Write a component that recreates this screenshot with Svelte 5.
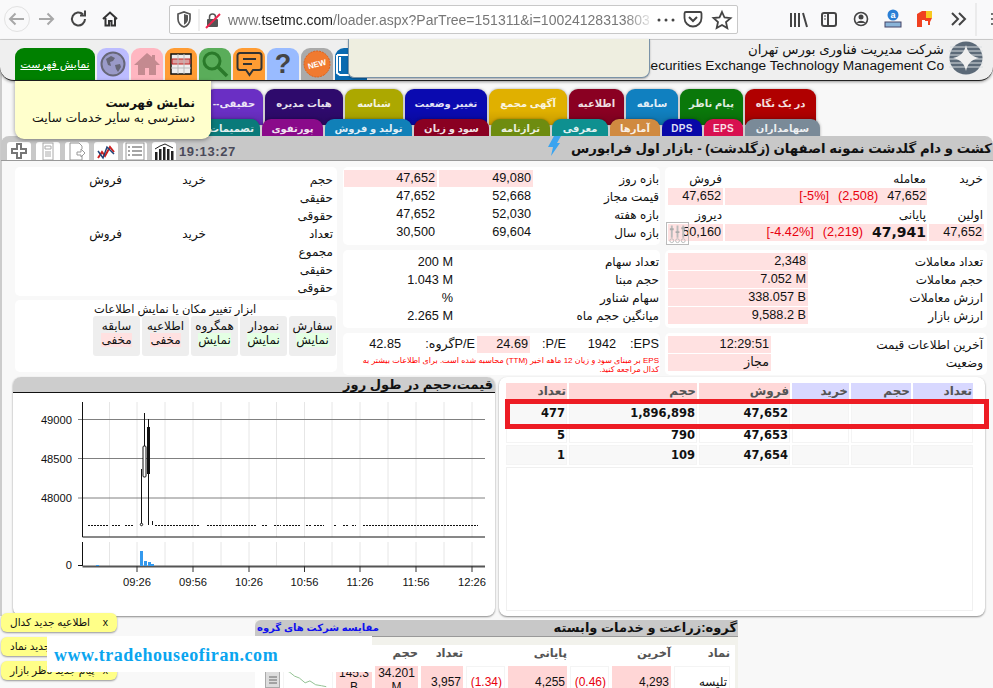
<script>
  const tabsTop = [
    ['حقیقی--', 58, '#6a2fc4'], ['هیات مدیره', 78, '#2e0a6c'], ['شناسه', 58, '#aca800'], ['تغییر وضعیت', 82, '#0a0ab0'],
    ['آگهی مجمع', 78, '#e0b000'], ['اطلاعیه', 55, '#8a0022'], ['سابقه', 52, '#1080c0'], ['پیام ناظر', 63, '#0a780a'], ['در یک نگاه', 71, '#b00000']
  ]
  const tabsBottom = [
    ['تصمیمات', 57, '#0a7a7a'], ['پورتفوی', 61, '#8a0a8a'], ['تولید و فروش', 87, '#1080b8'], ['سود و زیان', 75, '#8a0022'], ['ترازنامه', 59, '#6e8c10'],
    ['معرفی', 56, '#0e9090'], ['آمارها', 50, '#d08a40'], ['DPS', 40, '#0808a8'], ['EPS', 39, '#d81050'], ['سهامداران', 75, '#7a8a98']
  ]
  const ranges = [
    ['بازه روز', '49,080', '47,652', true], ['قیمت مجاز', '52,668', '47,652'], ['بازه هفته', '52,030', '47,652'], ['بازه سال', '69,604', '30,500']
  ]
  const trades = [['تعداد معاملات', '2,348'], ['حجم معاملات', '7.052 M'], ['ارزش معاملات', '338.057 B'], ['ارزش بازار', '9,588.2 B']]
  const shares = [['تعداد سهام', '200 M'], ['حجم مبنا', '1.043 M'], ['سهام شناور', '%'], ['میانگین حجم ماه', '2.265 M']]
  const people = [
    ['حجم', 'خرید', 'فروش'], ['حقیقی', '', ''], ['حقوقی', '', ''], ['تعداد', 'خرید', 'فروش'], ['مجموع', '', ''], ['حقیقی', '', ''], ['حقوقی', '', '']
  ]
  const tools = [['سفارش', 'نمایش', 1], ['نمودار', 'نمایش', 1], ['همگروه', 'نمایش', 1], ['اطلاعیه', 'مخفی', 0], ['سابقه', 'مخفی', 0]]
  const orders = [['477', '1,896,898', '47,652'], ['5', '790', '47,653'], ['1', '109', '47,654']]
  const vGrid = [109.5, 137, 165, 193, 221, 249, 276.5, 304.5, 332, 360, 388, 416, 444, 472]
  const times = [[137, '09:26'], [193, '09:56'], [249, '10:26'], [304.5, '10:56'], [360, '11:26'], [416, '11:56'], [472, '12:26']]
  const prices = [[419.5, '49000'], [458.5, '48500'], [498, '48000']]
  const dashes = [[88, 108], [112, 121], [125, 134], [155, 199], [207, 232], [233, 256], [262, 268], [274, 281], [283, 300], [306, 312], [314, 324], [334, 337], [343, 348], [352, 356], [363, 478]]
</script>

<div class="page">
  <div class="toolbar">
    <svg class="tb-left" width="125" height="40" viewBox="0 0 125 40" fill="none">
      <circle cx="17" cy="19" r="12.5" stroke="#e2e2e2" fill="#f9f9fa"/>
      <path d="M24 19H10M15.5 13.5L10 19l5.5 5.5" stroke="#a8a8a8" stroke-width="2"/>
      <path d="M39 19h14M47.5 13.5L53 19l-5.5 5.5" stroke="#a8a8a8" stroke-width="2"/>
      <path d="M85 19a6.5 6.5 0 1 1-2-4.7M85 10.5v5h-5" stroke="#444" stroke-width="2"/>
      <path d="M103 19l7-6.5 7 6.5M105.5 18v7.5h3.5v-4.5h2.5v4.5h3.5V18" stroke="#333" stroke-width="2"/>
    </svg>
    <div class="urlbar">
      <svg width="58" height="28" viewBox="0 0 58 28" fill="none">
        <path d="M8 8l6-2 6 2v5c0 4-3 7-6 8-3-1-6-4-6-8z" stroke="#555" stroke-width="1.7"/>
        <path d="M14 8l4 1.300v4c0 2.500-2 4.500-4 5.500z" fill="#555"/>
        <path d="M29 3v22" stroke="#ddd"/>
        <rect x="37" y="13" width="11" height="8" rx="1" fill="#555"/>
        <path d="M39.500 13v-2a3 3 0 0 1 6 0v2" stroke="#555" stroke-width="1.500"/>
        <path d="M36 22l14-14" stroke="#f0244e" stroke-width="2"/>
      </svg>
      <div class="url"><span>www.</span><b>tsetmc.com</b><span>/loader.aspx?ParTree=151311&amp;i=10024128313803</span></div>
      <svg width="82" height="28" viewBox="0 0 82 28" fill="none">
        <path d="M4 14h.01M11 14h.01M18 14h.01" stroke="#444" stroke-width="3" stroke-linecap="round"/>
        <path d="M31 6h14a1.500 1.500 0 0 1 1.500 1.500V12a8.500 8.500 0 0 1-17 0V7.500A1.500 1.500 0 0 1 31 6z" stroke="#444" stroke-width="1.800"/>
        <path d="M34 11l4 4 4-4" stroke="#444" stroke-width="2"/>
        <path d="M67 6l2.500 5.500 6 .6-4.500 4 1.300 6L67 19l-5.300 3 1.300-6-4.500-4 6-.6z" stroke="#444" stroke-width="1.800"/>
      </svg>
    </div>
    <svg class="tb-right" width="217" height="40" viewBox="776 0 217 40" fill="none">
      <path d="M791 13v14M795 13v14M799 13v14M803 13l4 14" stroke="#444" stroke-width="2"/>
      <rect x="822" y="13" width="14" height="13" rx="2" stroke="#444" stroke-width="2"/>
      <path d="M828 13v13" stroke="#444" stroke-width="2"/>
      <path d="M824 16h2M824 19h2" stroke="#444"/>
      <circle cx="861" cy="19" r="6.500" stroke="#444" stroke-width="1.600"/>
      <circle cx="861" cy="17" r="2.500" fill="#444"/>
      <path d="M856.500 23c2-3 7-3 9 0z" fill="#444"/>
      <circle cx="893" cy="15" r="5.500" fill="#2a7fd5"/>
      <text x="893" y="18" class="ext-a">a</text>
      <rect x="885" y="22" width="16" height="5" fill="#8ab4d8" stroke="#446"/>
      <path d="M917 14l5-3h9l1 1v6l-2 4v3h-2v-4h-3v-1h-3v7h-5z" fill="#f04020"/>
      <path d="M926 11h6v7h-6z" fill="#f8c820"/>
      <path d="M952 13l6 6-6 6M959 13l6 6-6 6" stroke="#444" stroke-width="2"/>
      <path d="M976 3v33" stroke="#ddd"/>
      <path d="M992 14v.01M992 19v.01M992 24v.01" stroke="#444" stroke-width="2" stroke-linecap="round"/>
    </svg>
  </div>

  <div class="site-header">
    <div class="icon-tabs">
      <a class="menu-btn">نمایش فهرست</a>
      <span class="itab lav"><svg width="26" height="26" viewBox="0 0 26 26" fill="none"><circle cx="13" cy="13" r="11.500" fill="#9a9ac8" stroke="#667" stroke-width="2"/><path d="M6 8l5-3 4 2-2 3-3 1 1 4-3-1zM15 14l5-1 1 3-3 5-2-3z" fill="#667"/></svg></span>
      <span class="itab pnk"><svg width="28" height="26" viewBox="0 0 28 26"><path d="M14 2L1 14h4v10h7v-7h4v7h7V14h4l-5-5V4h-3v2z" fill="#c48a90"/></svg></span>
      <span class="itab org"><svg width="22" height="22" viewBox="0 0 22 22"><rect x="1" y="1" width="20" height="20" fill="#eee" stroke="#111" stroke-width="1.500"/><path d="M2 6h18v5H2z" fill="#d9a0a0" stroke="#c02020"/><path d="M8 1v20M14 1v20M1 15h20" stroke="#bbb"/></svg></span>
      <span class="itab grn"><svg width="28" height="28" viewBox="0 0 28 28" fill="none"><circle cx="11" cy="11" r="8" stroke="#2a7a2a" stroke-width="3"/><path d="M17 17l9 9" stroke="#2a7a2a" stroke-width="3.500"/></svg></span>
      <span class="itab org"><svg width="27" height="26" viewBox="0 0 27 26" fill="none"><path d="M4 2h19a2.500 2.500 0 0 1 2.500 2.500v12A2.500 2.500 0 0 1 23 19h-6l-3.500 5-3.500-5H4a2.500 2.500 0 0 1-2.500-2.500v-12A2.500 2.500 0 0 1 4 2z" stroke="#333" stroke-width="2"/><path d="M7 8h13M7 13h9" stroke="#333" stroke-width="2"/></svg></span>
      <span class="itab blu"><span class="qmark">?</span></span>
      <span class="itab gry"><svg width="28" height="28" viewBox="0 0 28 28"><circle cx="14" cy="14" r="13" fill="#f07a30" stroke="#e06018" stroke-dasharray="2 1"/><text x="14" y="17" class="new" transform="rotate(-15 14 14)">NEW</text></svg></span>
      <span class="itab book"><svg width="14" height="26" viewBox="0 0 14 26" fill="none"><path d="M2 4h12M2 4v18l3 2h9M5 6v14" stroke="#fff" stroke-width="2"/></svg></span>
    </div>
    <div class="brand">
      <div class="brand-text">
        <div class="fa">شرکت مدیریت فناوری بورس تهران</div>
        <div class="en">Tehran Securities Exchange Technology Management Co</div>
      </div>
      <svg width="34" height="34" viewBox="0 0 34 34">
        <circle cx="17" cy="17" r="16.500" fill="#5c6a78"/>
        <path d="M1 6h32M0 10h34M0 14h34M0 18h34M0 22h34M0 26h34" stroke="#d8dde0" stroke-width="1"/>
        <path d="M17 4c1.500 7 5 11.500 13 13-8 1.500-11.500 6-13 13-1.500-7-5-11.500-13-13 8-1.500 11.500-6 13-13z" fill="#f0f0f0"/>
      </svg>
    </div>
    <div class="popup"></div>
  </div>

  <div class="menu">
    <div class="tab-row">
      {#each tabsTop as t}
        <span class="tab" style="width:{t[1]}px;background:{t[2]}">{t[0]}</span>
      {/each}
    </div>
    <div class="tab-row second">
      {#each tabsBottom as t}
        <span class="tab" style="width:{t[1]}px;background:{t[2]}">{t[0]}</span>
      {/each}
    </div>
  </div>

  <div class="tooltip">
    <b>نمایش فهرست</b>
    <span>دسترسی به سایر خدمات سایت</span>
  </div>

  <div class="titlebar">
    <div class="tools">
      <span class="tool"><svg width="18" height="18" viewBox="0 0 18 18" fill="none"><path d="M7 2h4v5h5v4h-5v5H7v-5H2V7h5z" stroke="#777" stroke-width="2"/></svg></span>
      <span class="tool"><svg width="18" height="18" viewBox="0 0 18 18" fill="none"><rect x="4" y="1" width="10" height="17" stroke="#aaa"/><path d="M6 4h6v3H6zM6 10h6M6 12h6M6 14h6" stroke="#aaa"/></svg></span>
      <span class="tool"><svg width="18" height="18" viewBox="0 0 18 18" fill="none"><path d="M2 1h9l3 3v3M2 1v17h12v-4M9 10h4V7l4 4-4 4v-2H9z" stroke="#999"/></svg></span>
      <span class="tool"><svg width="20" height="18" viewBox="0 0 20 18" fill="none"><path d="M2 16l4-6 3 4 5-9 4 5" stroke="#c22" stroke-width="2"/><path d="M2 9l5 7 4-11 7 7" stroke="#247" stroke-width="1.500"/></svg></span>
      <span class="tool"><svg width="20" height="18" viewBox="0 0 20 18" fill="none"><rect x="1" y="1" width="18" height="17" stroke="#999"/><path d="M3 5h2M3 9h2M3 13h2M7 5h10M7 9h10M7 13h10" stroke="#888" stroke-width="1.500"/></svg></span>
      <span class="tool"><svg width="20" height="18" viewBox="0 0 20 18" fill="#222"><path d="M1 10h2.500v8H1zM5 7h2.500v11H5zM9 5h2.500v13H9zM13 7h2.500v11H13zM17 9h2.500v9H17z"/><path d="M1 7l5-3 5-2 4 2 4 2" fill="none" stroke="#222"/></svg></span>
      <span class="clock">19:13:27</span>
    </div>
    <div class="title">
      <svg width="14" height="20" viewBox="0 0 14 20"><path d="M7 0h7l-4 7h3L4 20l2-9H1z" fill="#3aa4f0"/></svg>
      <span>کشت و دام گلدشت نمونه اصفهان (زگلدشت) - بازار اول فرابورس</span>
    </div>
  </div>

  <div class="info">
    <div class="side">
      <div class="card people">
        {#each people as p}
          <div class="p-row"><span>{p[0]}</span><span>{p[1]}</span><span>{p[2]}</span></div>
        {/each}
      </div>
      <div class="card toolbox">
        <div class="tb-title">ابزار تغییر مکان یا نمایش اطلاعات</div>
        <div class="tb-btns">
          {#each tools as t}
            <div class="tb-btn"><span>{t[0]}</span><span class={t[2] ? 'on' : 'off'}>{t[1]}</span></div>
          {/each}
        </div>
      </div>
    </div>

    <div class="card ranges">
      {#each ranges as r}
        <span class="lbl">{r[0]}</span>
        <span class="val" class:pink={r[3]}>{r[1]}</span>
        <span class="val" class:pink={r[3]}>{r[2]}</span>
      {/each}
    </div>

    <div class="card prices">
      <span class="lbl">خرید</span><span class="lbl">معامله</span><span class="lbl">فروش</span>
      <span></span>
      <span class="val pink deal"><span class="num">47,652</span><span class="num red">(2,508)</span><span class="num red">[-5%]</span></span>
      <span class="val pink">47,652</span>
      <span class="lbl">اولین</span><span class="lbl">پایانی</span><span class="lbl">دیروز</span>
      <span class="val pink">47,652</span>
      <span class="val pink deal"><span class="num big">47,941</span><span class="num red">(2,219)</span><span class="num red">[-4.42%]</span></span>
      <span class="val pink">50,160</span>
      <span class="mixer"><svg width="22" height="22" viewBox="0 0 22 22" fill="none"><path d="M5 2v13M11 2v13M17 2v13" stroke="#bbb" stroke-width="2"/><path d="M3 6h4M9 9h4M15 5h4" stroke="#aaa" stroke-width="2"/><circle cx="5" cy="18" r="2" stroke="#bbb"/><circle cx="11" cy="18" r="2" stroke="#bbb"/><circle cx="17" cy="18" r="2" stroke="#bbb"/></svg></span>
    </div>

    <div class="card shares">
      {#each shares as s}
        <span class="lbl">{s[0]}</span>
        <span class="num">{s[1]}</span>
      {/each}
    </div>

    <div class="card trades">
      {#each trades as t}
        <span class="lbl">{t[0]}</span>
        <span class="val pink">{t[1]}</span>
      {/each}
    </div>

    <div class="card eps">
      <div class="eps-row">
        <span>EPS:</span><span>1942</span><span class="pe">P/E:</span><span class="val pink">24.69</span><span class="ge">P/Eگروه:</span><span class="pe">42.85</span>
      </div>
      <p>EPS بر مبنای سود و زیان 12 ماهه اخیر (TTM) محاسبه شده است. برای اطلاعات بیشتر به کدال مراجعه کنید.</p>
    </div>

    <div class="card last">
      <span class="lbl">آخرین اطلاعات قیمت</span><span class="val pink">12:29:51</span>
      <span class="lbl">وضعیت</span><span class="val pink">مجاز</span>
    </div>
  </div>

  <div class="boards">
    <div class="board chart">
      <div class="board-head">قیمت،حجم در طول روز</div>
      <svg width="480" height="223" viewBox="14 393 480 223">
        {#each vGrid as x}
          <path d="M{x} 402V537M{x} 542V566" stroke="#e6e6e6"/>
        {/each}
        {#each prices as p}
          <path d="M78 {p[0]}H485" stroke="#808080"/>
          <text x="72" y={p[0] + 4} class="ax end">{p[1]}</text>
        {/each}
        {#each dashes as d}
          <path d="M{d[0]} 525.500H{d[1]}" stroke="#111" stroke-dasharray="2 1"/>
        {/each}
        <path d="M82.500 402V537H485M82.500 542V566" stroke="#111" fill="none"/>
        <path d="M82.500 566.500H485" stroke="#555" stroke-width="2"/>
        <path d="M141.500 469V524M144.500 413V446M148.500 419V525M152.500 521V525" stroke="#111"/>
        <rect x="143" y="446" width="3" height="31" rx="1" fill="#fff" stroke="#111"/>
        <rect x="147" y="427" width="3" height="47" fill="#111"/>
        <circle cx="141.500" cy="524.500" r="1.200" fill="#fff" stroke="#111"/>
        <path d="M140 551h3v15h-3zM144 561h3v5h-3zM148 562h3v4h-3zM151 564h3v2h-3zM96 565h3v1h-3z" fill="#3399ee"/>
        <path d="M78 565.500H82" stroke="#111"/>
        <text x="72" y="569" class="ax end">0</text>
        {#each times as t}
          <path d="M{t[0]} 566V572" stroke="#333"/>
          <text x={t[0]} y="586" class="ax mid">{t[1]}</text>
        {/each}
      </svg>
    </div>

    <div class="board book-side">
      <div class="ob-grid">
        <span class="bh blu-h">تعداد</span><span class="bh blu-h">حجم</span><span class="bh blu-h">خرید</span>
        <span class="bh pnk-h">فروش</span><span class="bh pnk-h">حجم</span><span class="bh pnk-h">تعداد</span>
        {#each orders as o, i}
          <span class="oc" class:alt={i !== 1}></span><span class="oc" class:alt={i !== 1}></span><span class="oc" class:alt={i !== 1}></span>
          <span class="oc" class:alt={i !== 1}>{o[2]}</span><span class="oc" class:alt={i !== 1}>{o[1]}</span><span class="oc" class:alt={i !== 1}>{o[0]}</span>
        {/each}
      </div>
      <div class="ob-empty"></div>
    </div>
  </div>

  <div class="group">
    <div class="group-head">
      <a>مقایسه شرکت های گروه</a>
      <b>گروه:زراعت و خدمات وابسته</b>
    </div>
    <div class="group-grid">
      <span class="gh">نماد</span><span class="gh">آخرین</span><span></span><span class="gh">پایانی</span><span></span><span class="gh">تعداد</span><span class="gh">حجم</span><span></span><span></span>
      <span class="gc plain">تلیسه</span>
      <span class="gc rose">4,293</span>
      <span class="gc plain red">(0.46)</span>
      <span class="gc rose">4,255</span>
      <span class="gc plain red">(1.34)</span>
      <span class="gc rose">3,957</span>
      <span class="gc rose wrap">34.201 M</span>
      <span class="gc rose wrap">145.3 B</span>
      <span class="gc plain spark"><svg width="50" height="24" viewBox="0 0 50 24" fill="none"><path d="M0 2l6 3 5 4 5 2 6 5 5-2 6 4 6 1 5 1" stroke="#8fbf8f"/></svg></span>
    </div>
    <div class="scroll"><svg width="10" height="10" viewBox="0 0 10 10"><path d="M1 2h8M1 5h8M1 8h8" stroke="#666"/></svg></div>
  </div>

  <div class="notices">
    <div class="notice"><span>اطلاعیه جدید کدال</span><i>x</i></div>
    <div class="notice"><span>اطلاعیه جدید نماد</span><i>x</i></div>
    <div class="notice"><span>پیام جدید ناظر بازار</span><i>x</i></div>
  </div>

  <div class="watermark">www.tradehouseofiran.com</div>
  <div class="highlight"></div>
</div>

<style>
  :global(body) {
    margin: 0;
  }

  .page {
    position: relative;
    width: 993px;
    height: 688px;
    overflow: hidden;
    background: linear-gradient(to right, #ccc 2px, transparent 2px) no-repeat 0 0 / 2px 616px, #f8f8f8;
    font-family: "Liberation Sans", "DejaVu Sans", sans-serif;
    font-size: 12px;
    color: #111;
  }

  .toolbar {
    display: flex;
    height: 40px;
    background: #f9f9fa;
    border-bottom: 1px solid #d4d4d4;
    box-sizing: border-box;
  }

  .tb-left {
    flex: none;
    margin-right: 44px;
  }

  .tb-right {
    flex: none;
    margin-left: 38px;
  }

  .urlbar {
    display: flex;
    align-items: center;
    flex: none;
    box-sizing: border-box;
    width: 569px;
    height: 29px;
    margin-top: 5px;
    background: #fff;
    border: 1px solid #c8c8c8;
    border-radius: 2px;
  }

  .urlbar svg {
    flex: none;
  }

  .url {
    flex: none;
    width: 427px;
    overflow: hidden;
    white-space: nowrap;
    font-size: 14px;
    color: #777;
    -webkit-mask-image: linear-gradient(to right, #000 93%, transparent);
    mask-image: linear-gradient(to right, #000 93%, transparent);
  }

  .url b {
    font-weight: 400;
    color: #222;
  }

  .ext-a {
    fill: #fff;
    font-size: 9px;
    font-weight: 700;
    text-anchor: middle;
  }

  .site-header {
    position: relative;
    display: flex;
    justify-content: space-between;
    box-sizing: border-box;
    height: 41px;
    background: #efefef;
    border-bottom: 1px solid #222;
    border-radius: 0 0 14px 14px;
    box-shadow: 0 1px 3px rgba(0, 0, 0, 0.4);
  }

  .icon-tabs {
    display: flex;
    align-items: flex-end;
    gap: 2px;
    padding-left: 15px;
  }

  .menu-btn {
    display: flex;
    align-items: center;
    justify-content: center;
    width: 80px;
    height: 32px;
    background: #008000;
    border-radius: 9px 9px 0 0;
    color: #fff;
    font-size: 11px;
    text-decoration: underline;
    white-space: nowrap;
  }

  .itab {
    display: flex;
    align-items: center;
    justify-content: center;
    width: 32px;
    height: 32px;
    border-radius: 9px 9px 0 0;
  }

  .lav { background: #bcbcff; }
  .pnk { background: #ffb6c1; }
  .org { background: #ff9c33; }
  .grn { background: #5aad5a; }
  .blu { background: #99bbff; }
  .gry { background: #aaa; }
  .book { background: #0a6ab0; justify-content: flex-start; }

  .qmark {
    font-size: 27px;
    font-weight: 700;
    color: #444;
  }

  .new {
    fill: #fff;
    font-size: 8px;
    font-weight: 700;
    text-anchor: middle;
  }

  .brand {
    display: flex;
    align-items: flex-start;
    gap: 5px;
    padding-right: 10px;
  }

  .brand svg {
    margin-top: 1px;
  }

  .brand-text {
    direction: rtl;
    text-align: right;
    white-space: nowrap;
  }

  .brand-text .fa {
    font-size: 13.300px;
    line-height: 17px;
    margin-top: 1px;
  }

  .brand-text .en {
    direction: ltr;
    font-size: 13.700px;
    line-height: 16px;
  }

  .popup {
    position: absolute;
    left: 348px;
    top: -1px;
    width: 300px;
    height: 38px;
    background: #eeeee0;
    border: 1px solid #7a93a8;
    border-top: 0;
    border-radius: 0 0 8px 6px;
    box-shadow: 0 1px 2px rgba(0, 0, 0, 0.3);
  }

  .menu {
    height: 55px;
    overflow: hidden;
    padding-top: 8px;
    box-sizing: border-box;
  }

  .tab-row {
    display: flex;
    gap: 2px;
    height: 36px;
    padding-left: 205px;
  }

  .tab-row.second {
    position: relative;
    margin-top: -6px;
    padding-left: 203px;
  }

  .tab {
    flex: none;
    box-sizing: border-box;
    padding-top: 9px;
    border-radius: 9px 9px 0 0;
    box-shadow: 0 0 3px rgba(0, 0, 0, 0.35);
    background-image: linear-gradient(to bottom, transparent 60%, rgba(0, 0, 0, 0.12)) !important;
    text-align: center;
    direction: rtl;
    font-size: 10px;
    font-weight: 700;
    letter-spacing: 0.3px;
    white-space: nowrap;
    overflow: hidden;
    color: rgba(255, 255, 255, 0.88);
  }

  .second .tab {
    padding-top: 4px;
  }

  .tooltip {
    position: absolute;
    left: 15px;
    top: 81px;
    display: flex;
    flex-direction: column;
    box-sizing: border-box;
    width: 196px;
    height: 58px;
    padding: 15px 16px 0 0;
    background: #ffffcc;
    border-radius: 0 0 9px 9px;
    box-shadow: 0 1px 4px rgba(0, 0, 0, 0.4);
    direction: rtl;
    line-height: 15px;
    white-space: nowrap;
  }

  .tooltip b {
    font-size: 12px;
  }

  .tooltip span {
    font-size: 12.500px;
  }

  .titlebar {
    display: flex;
    justify-content: space-between;
    box-sizing: border-box;
    height: 25px;
    margin-left: 1px;
    background: #c8c8c8;
    border-bottom: 1px solid #999;
    border-radius: 8px 8px 0 0;
  }

  .tools {
    display: flex;
    align-items: flex-end;
    gap: 5px;
    padding-left: 6px;
  }

  .tool {
    display: flex;
    align-items: center;
    justify-content: center;
    width: 24px;
    height: 18px;
    overflow: hidden;
    background: #fff;
    border-radius: 3px 3px 0 0;
  }

  .clock {
    align-self: center;
    margin: 7px 0 0 -2px;
    font-size: 13px;
    font-weight: 700;
    color: #4a4a5a;
    letter-spacing: 0.6px;
  }

  .title {
    display: flex;
    align-items: center;
    gap: 10px;
    width: 446px;
    overflow: hidden;
    white-space: nowrap;
    font-size: 13.300px;
    font-weight: 700;
    color: #111;
  }

  .title svg {
    flex: none;
    margin-top: -5px;
  }

  .title span {
    direction: rtl;
  }

  .info {
    display: grid;
    grid-template-columns: 323px 317px 322px;
    grid-template-rows: 78px 78px 42px;
    gap: 5px;
    margin-left: 15px;
    margin-top: 6px;
    height: 208px;
  }

  .card {
    box-sizing: border-box;
    background: #fff;
    border-radius: 5px;
    direction: rtl;
  }

  .side {
    grid-row: 1 / 4;
    display: flex;
    flex-direction: column;
    gap: 4px;
    width: 322px;
  }

  .people {
    height: 129px;
    padding-top: 4px;
  }

  .p-row {
    display: grid;
    grid-template-columns: 127px 84px 1fr;
    height: 18px;
    padding-right: 4px;
    line-height: 18px;
  }

  .toolbox {
    height: 72px;
    padding: 2px 1px 0 0;
  }

  .tb-title {
    text-align: left;
    padding-left: 79px;
    line-height: 14px;
    white-space: nowrap;
    font-size: 11.500px;
  }

  .tb-btns {
    display: flex;
    gap: 2px;
  }

  .tb-btn {
    display: flex;
    flex-direction: column;
    align-items: center;
    box-sizing: border-box;
    width: 47px;
    height: 40px;
    padding-top: 3px;
    background: #eee;
    border-radius: 3px;
    font-size: 12px;
    line-height: 14px;
    white-space: nowrap;
  }

  .on { background: #e4ffe4; }
  .off { background: #ffe1e1; }

  .lbl {
    line-height: 18px;
    white-space: nowrap;
  }

  .val {
    display: block;
    height: 17px;
    line-height: 17px;
    padding: 0 2px;
    direction: ltr;
    text-align: right;
    box-sizing: border-box;
    white-space: nowrap;
    font-size: 12.700px;
  }

  .pink {
    background: #ffe1e1;
  }

  .num {
    direction: ltr;
    text-align: right;
    font-size: 12.700px;
  }

  .ranges {
    display: grid;
    grid-template-columns: 124px 94px 93px;
    grid-auto-rows: 18px;
    column-gap: 2px;
    padding: 3px 1px 0 0;
  }

  .prices {
    position: relative;
    display: grid;
    grid-template-columns: 55px 202px 55px;
    grid-auto-rows: 18px;
    column-gap: 2px;
    padding: 3px 3px 0 0;
  }

  .prices .lbl {
    padding-right: 1px;
  }

  .deal {
    display: flex;
    direction: rtl;
    gap: 9px;
    padding: 0 1px;
  }

  .red {
    color: #e8000e;
  }

  .big {
    font-family: "DejaVu Sans", sans-serif;
    font-size: 14px;
    font-weight: 700;
  }

  .mixer {
    position: absolute;
    left: 1px;
    bottom: 0;
    display: flex;
    align-items: center;
    justify-content: center;
    width: 23px;
    height: 23px;
    border: 1px solid #bbb;
    box-sizing: border-box;
  }

  .shares {
    display: grid;
    grid-template-columns: 1fr 110px;
    grid-auto-rows: 18px;
    padding: 3px 1px 0 0;
    line-height: 18px;
  }

  .trades {
    display: grid;
    grid-template-columns: 1fr 140px;
    grid-auto-rows: 18px;
    padding: 3px 0 0 3px;
  }

  .trades .lbl {
    padding-right: 4px;
  }

  .eps {
    padding: 3px 1px 0 0;
    overflow: hidden;
  }

  .eps-row {
    display: grid;
    grid-template-columns: 43px 46px 40px 53px 72px 57px;
    line-height: 17px;
    font-size: 12.700px;
  }

  .eps-row .pe {
    direction: rtl;
    padding-right: 4px;
  }

  .eps-row .ge {
    white-space: nowrap;
    padding-right: 2px;
  }

  .eps p {
    margin: 3px 0 0;
    padding-left: 8px;
    font-size: 8px;
    line-height: 9px;
    color: #f00;
  }

  .last {
    display: grid;
    grid-template-columns: 1fr 103px;
    grid-auto-rows: 18px;
    padding: 3px 0 0 3px;
  }

  .last .lbl {
    padding-right: 4px;
  }

  .boards {
    display: flex;
    gap: 4px;
    height: 239px;
    margin: 2px 0 0 13px;
  }

  .board {
    box-sizing: border-box;
    height: 239px;
    background: #fff;
    border-radius: 8px;
    box-shadow: 0 1px 2px rgba(0, 0, 0, 0.45);
    overflow: hidden;
  }

  .chart {
    width: 482px;
  }

  .chart svg {
    display: block;
    margin-left: 1px;
  }

  .board-head {
    box-sizing: border-box;
    height: 16px;
    padding-right: 2px;
    background: #cdcdcd;
    border-bottom: 1px solid #111;
    direction: rtl;
    font-size: 13px;
    font-weight: 700;
    line-height: 15px;
    white-space: nowrap;
  }

  .ax {
    font-size: 11.200px;
    fill: #111;
  }

  .end {
    text-anchor: end;
  }

  .mid {
    text-anchor: middle;
  }

  .book-side {
    width: 486px;
    padding: 6px 12px 6px 7px;
  }

  .ob-grid {
    display: grid;
    direction: rtl;
    grid-template-columns: 60px 60px 57px 91px 128px 61px;
    grid-template-rows: 16px 24px 16px 20px;
    gap: 2px;
  }

  .bh {
    padding-right: 1px;
    color: #555;
    font-size: 12px;
    font-weight: 700;
    line-height: 17px;
  }

  .blu-h { background: #d8d8ff; }
  .pnk-h { background: #ffd8d8; }

  .oc {
    display: flex;
    align-items: center;
    justify-content: flex-end;
    padding-right: 1px;
    border: 1px solid #f4f4f4;
    box-sizing: border-box;
    direction: ltr;
    font-family: "DejaVu Sans", sans-serif;
    font-size: 11.500px;
    font-weight: 700;
  }

  .alt {
    background: #f8f8f8;
  }

  .ob-empty {
    height: 142px;
    margin-top: 2px;
    border: 1px solid #f0f0f0;
  }

  .group {
    position: relative;
    box-sizing: border-box;
    width: 483px;
    margin: 4px 0 0 255px;
    height: 68px;
    background: #f2f2ec;
    overflow: hidden;
  }

  .group-head {
    display: flex;
    justify-content: space-between;
    box-sizing: border-box;
    height: 17px;
    padding: 0 1px 0 2px;
    background: #c8c8c8;
    border-bottom: 1px solid #999;
    border-radius: 6px 0 0 0;
    white-space: nowrap;
    line-height: 16px;
  }

  .group-head a {
    color: #1010ee;
    font-size: 10px;
    font-weight: 700;
    direction: rtl;
  }

  .group-head b {
    direction: rtl;
    font-size: 13px;
    color: #111;
  }

  .group-grid {
    display: grid;
    direction: rtl;
    grid-template-columns: 56px 59px 39px 59px 39px 42px 43px 36px 50px;
    grid-template-rows: 18px 32px;
    gap: 3px;
    margin: 8px 3px 0 0;
    padding-right: 5px;
    background: #fff;
  }

  .gh {
    color: #555;
    font-weight: 700;
    text-align: right;
    line-height: 16px;
    white-space: nowrap;
    font-size: 11.500px;
  }

  .gc {
    display: flex;
    align-items: center;
    padding-left: 2px;
    direction: ltr;
    box-sizing: border-box;
  }

  .plain {
    background: #fff;
    border: 1px solid #f4f4f4;
    justify-content: flex-start;
    direction: rtl;
    padding: 0 2px 0 0;
  }

  .rose {
    background: #ffd6d6;
    justify-content: flex-end;
    padding-right: 2px;
  }

  .wrap {
    align-items: flex-start;
    justify-content: center;
    text-align: center;
    line-height: 14px;
    word-spacing: 20px;
  }

  .spark {
    padding: 0;
    align-items: flex-start;
  }

  .scroll {
    position: absolute;
    left: 10px;
    top: 50px;
    display: flex;
    justify-content: center;
    box-sizing: border-box;
    width: 15px;
    height: 18px;
    padding-top: 4px;
    background: #ddd;
    border: 1px solid #aaa;
  }

  .notices {
    position: absolute;
    left: 1px;
    top: 613px;
    display: flex;
    flex-direction: column;
    gap: 5px;
  }

  .notice {
    display: flex;
    justify-content: space-between;
    box-sizing: border-box;
    width: 116px;
    height: 19px;
    padding: 0 9px;
    background: #ffff88;
    border-radius: 6px;
    box-shadow: 0 1px 2px rgba(0, 0, 0, 0.4);
    font-size: 10.500px;
    line-height: 19px;
    white-space: nowrap;
  }

  .notice span {
    direction: rtl;
  }

  .notice i {
    font-style: normal;
  }

  .watermark {
    position: absolute;
    left: 47px;
    top: 636px;
    box-sizing: border-box;
    width: 325px;
    height: 36px;
    padding-left: 7px;
    background: #fff;
    color: #0aa5ef;
    font-family: "Liberation Serif", serif;
    font-size: 18px;
    font-weight: 700;
    line-height: 38px;
    letter-spacing: 0.55px;
  }

  .highlight {
    position: absolute;
    left: 505px;
    top: 399px;
    box-sizing: border-box;
    width: 484px;
    height: 30px;
    border: 5px solid #ed1c24;
  }
</style>
